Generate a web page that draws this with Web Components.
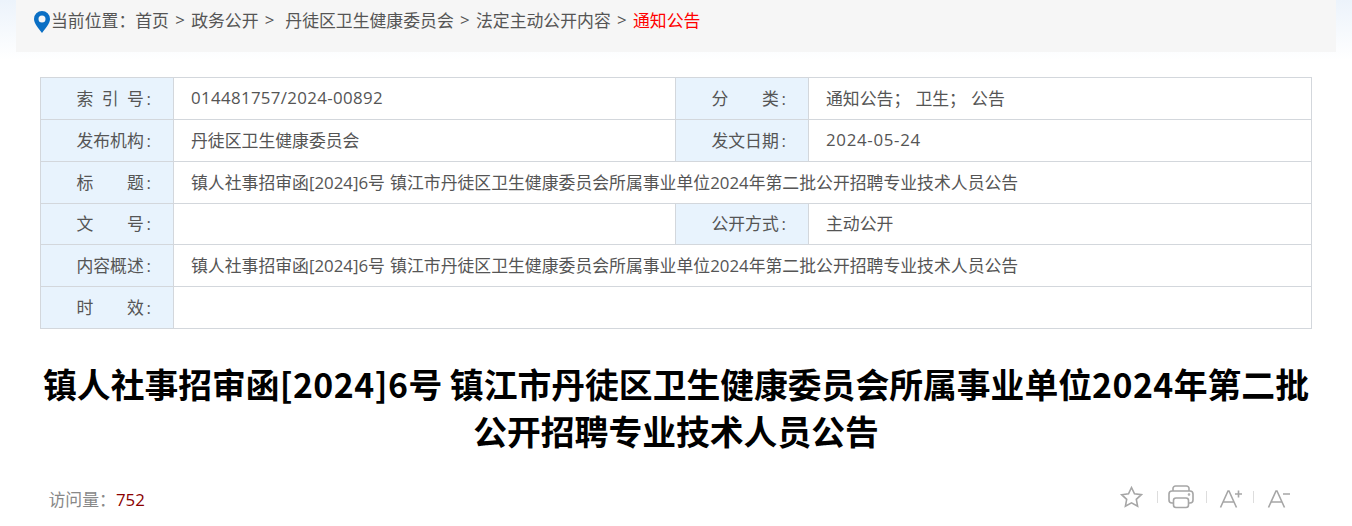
<!DOCTYPE html>
<html lang="zh">
<head>
<meta charset="utf-8">
<title>通知公告</title>
<style>
  html, body { margin: 0; height: 526px; overflow: hidden; background: #fff; }
  body { font-family: "Open Sans", "Noto Sans CJK SC", sans-serif; color: #555; }
</style>
</head>
<body>
<detail-page>
  <crumb-bar>
    <span>首页</span><i>&gt;</i><span>政务公开</span><i>&gt;</i><span class="wide">丹徒区卫生健康委员会</span><i>&gt;</i><span>法定主动公开内容</span><i>&gt;</i><span style="color:#f00">通知公告</span>
  </crumb-bar>
  <meta-table>
    <meta-label>索&ensp;引&ensp;号&#8201;:</meta-label><meta-value><span style="letter-spacing:.35px">014481757/2024-00892</span></meta-value>
    <meta-label>分　　类&#8201;:</meta-label><meta-value>通知公告； 卫生； 公告</meta-value>
    <meta-label>发布机构&#8201;:</meta-label><meta-value>丹徒区卫生健康委员会</meta-value>
    <meta-label>发文日期&#8201;:</meta-label><meta-value><span style="letter-spacing:.7px">2024-05-24</span></meta-value>
    <meta-label>标　　题&#8201;:</meta-label><meta-value wide>镇人社事招审函[2024]6号 镇江市丹徒区卫生健康委员会所属事业单位2024年第二批公开招聘专业技术人员公告</meta-value>
    <meta-label>文　　号&#8201;:</meta-label><meta-value></meta-value>
    <meta-label>公开方式&#8201;:</meta-label><meta-value>主动公开</meta-value>
    <meta-label>内容概述&#8201;:</meta-label><meta-value wide>镇人社事招审函[2024]6号 镇江市丹徒区卫生健康委员会所属事业单位2024年第二批公开招聘专业技术人员公告</meta-value>
    <meta-label>时　　效&#8201;:</meta-label><meta-value wide></meta-value>
  </meta-table>
  <article-title>镇人社事招审函<span>[2024]6</span>号 镇江市丹徒区卫生健康委员会所属事业单位<span>2024</span>年第二批<br>公开招聘专业技术人员公告</article-title>
  <tool-bar count="752"></tool-bar>
</detail-page>

<script>
class DetailPage extends HTMLElement {
    constructor() {
        super();
        this.attachShadow({mode: "open"});
        this.shadowRoot.innerHTML = `
            <style>
                :host {
                    display: block;
                    height: 526px;
                    background: linear-gradient(180deg, #ecf3fb 0, #fff 60px) no-repeat 0 0 / 100% 60px;
                }
            </style>
            <slot></slot>
        `;
    }
}

class CrumbBar extends HTMLElement {
    constructor() {
        super();
        this.attachShadow({mode: "open"});
        this.shadowRoot.innerHTML = `
            <style>
                :host {
                    display: flex;
                    align-items: center;
                    height: 52px;
                    margin: 0 16px;
                    padding: 0 0 14px 18px;
                    box-sizing: border-box;
                    background: #f6f6f6;
                    font-size: 16.85px;
                    color: #555;
                    white-space: nowrap;
                }
                svg { flex: none; margin-right: 1px; margin-top: 6px; }
                ::slotted(i) { font-style: normal; margin: 0 6.300px; }
                ::slotted(.wide) { margin-left: 4.500px; }
            </style>
            <svg width="16" height="22" viewBox="0 0 16 22">
                <path fill="#0b6fc4" fill-rule="evenodd" d="M8 0a8 8 0 0 1 8 8c0 4.6-4.6 9.600-8 14C4.600 17.600 0 12.600 0 8a8 8 0 0 1 8-8zm0 4.500a3.500 3.500 0 1 0 0 7 3.500 3.500 0 0 0 0-7z"/>
            </svg>
            <span>当前位置：</span>
            <slot></slot>
        `;
    }
}

class MetaTable extends HTMLElement {
    constructor() {
        super();
        this.attachShadow({mode: "open"});
        this.shadowRoot.innerHTML = `
            <style>
                :host {
                    display: grid;
                    grid-template-columns: 133px 502px 133px 1fr;
                    grid-template-rows: 42px 42px 42px 41px 42px 42px;
                    margin: 25px 40px 0;
                    border-top: 1px solid #d3d7dc;
                    border-left: 1px solid #d3d7dc;
                    font-size: 16.85px;
                    word-spacing: .8px;
                    color: #555;
                }
                ::slotted(*) { min-width: 0; }
            </style>
            <slot></slot>
        `;
    }
}

class MetaLabel extends HTMLElement {
    constructor() {
        super();
        this.attachShadow({mode: "open"});
        this.shadowRoot.innerHTML = `
            <style>
                :host {
                    display: flex;
                    align-items: center;
                    justify-content: flex-end;
                    padding: 0 22px 3px 0;
                    background: #e8f3fd;
                    border-right: 1px solid #d3d7dc;
                    border-bottom: 1px solid #d3d7dc;
                    white-space: nowrap;
                }
            </style>
            <slot></slot>
        `;
    }
}

class MetaValue extends HTMLElement {
    constructor() {
        super();
        this.attachShadow({mode: "open"});
        this.shadowRoot.innerHTML = `
            <style>
                :host {
                    display: flex;
                    align-items: center;
                    padding: 0 0 3px 17px;
                    border-right: 1px solid #d3d7dc;
                    border-bottom: 1px solid #d3d7dc;
                    white-space: nowrap;
                }
                :host([wide]) { grid-column: span 3; }
            </style>
            <slot></slot>
        `;
    }
}

class ArticleTitle extends HTMLElement {
    constructor() {
        super();
        this.attachShadow({mode: "open"});
        this.shadowRoot.innerHTML = `
            <style>
                :host {
                    display: block;
                    margin: 31px 30px 0;
                    font-family: "Noto Sans CJK SC", sans-serif;
                    font-size: 33.8px;
                    line-height: 47px;
                    font-weight: 700;
                    color: #000;
                    text-align: center;
                }
                ::slotted(span) { letter-spacing: .5px; }
            </style>
            <slot></slot>
        `;
    }
}

class ToolBar extends HTMLElement {
    constructor() {
        super();
        this.attachShadow({mode: "open"});
        this.shadowRoot.innerHTML = `
            <style>
                :host {
                    display: flex;
                    align-items: center;
                    justify-content: space-between;
                    margin: 32px 40px 0 48.500px;
                    height: 24px;
                    font-size: 16.85px;
                    color: #888;
                }
                .visits { margin-top: 0; }
                b { font-weight: 400; color: #8b0000; }
                .tools { display: flex; align-items: center; margin-right: 21px; margin-top: -2px; }
                .tools svg { display: block; fill: none; stroke: #a6a6a6; stroke-width: 1.600; }
                .sep { width: 1px; height: 12px; background: #ddd; }
            </style>
            <div class="visits">访问量：<b id="count"></b></div>
            <div class="tools">
                <svg width="24" height="24" viewBox="0 0 24 24"><path d="M12.500 2.500l3 6.300 6.800.9-5 4.700 1.300 6.800-6.100-3.400-6.100 3.400 1.300-6.800-5-4.700 6.800-.9z"/></svg>
                <span class="sep" style="margin:0 10px 0 14px"></span>
                <svg width="26" height="24" viewBox="0 0 26 24"><path d="M5 6V3.500A2.500 2.500 0 0 1 7.500 1h11A2.500 2.500 0 0 1 21 3.500V6M5 18H4a3 3 0 0 1-3-3V9a3 3 0 0 1 3-3h18a3 3 0 0 1 3 3v6a3 3 0 0 1-3 3h-1"/><rect x="5.500" y="13" width="15" height="9.500" rx="2.500"/><circle cx="21" cy="9.500" r=".5"/></svg>
                <span class="sep" style="margin:0 12px"></span>
                <svg width="24" height="24" viewBox="0 0 24 24"><path d="M1.500 22.500L9 6h1l7.500 16.500M4.500 17h10M16 9h7M19.500 5.500v7"/></svg>
                <span class="sep" style="margin:0 13px 0 10px"></span>
                <svg width="24" height="24" viewBox="0 0 24 24"><path d="M1.500 22.500L9 6h1l7.500 16.500M4.500 17h10M16 9h7"/></svg>
            </div>
        `;
    }

    connectedCallback() {
        this.shadowRoot.querySelector("#count").textContent = this.getAttribute("count");
    }
}

customElements.define("detail-page", DetailPage);
customElements.define("crumb-bar", CrumbBar);
customElements.define("meta-table", MetaTable);
customElements.define("meta-label", MetaLabel);
customElements.define("meta-value", MetaValue);
customElements.define("article-title", ArticleTitle);
customElements.define("tool-bar", ToolBar);
</script>
</body>
</html>
